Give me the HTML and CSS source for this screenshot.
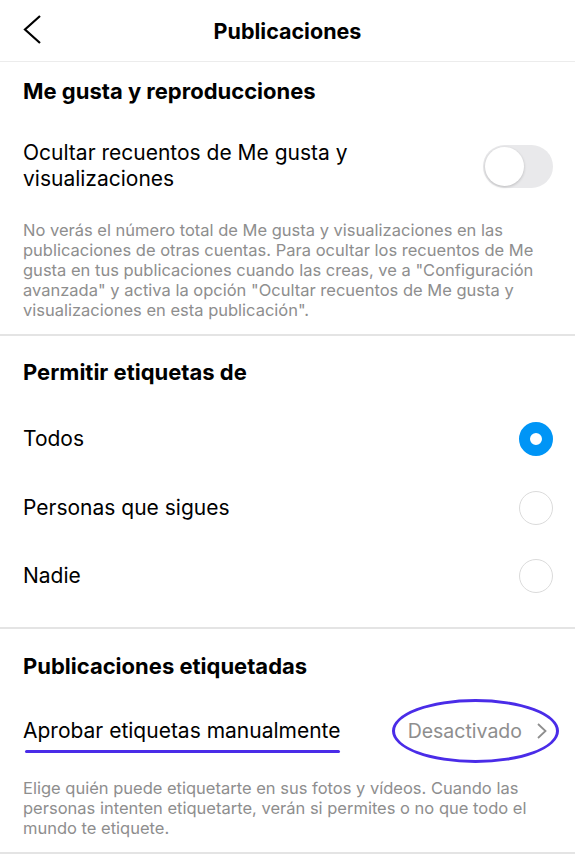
FILE: index.html
```html
<!DOCTYPE html>
<html lang="es">
<head>
    <meta charset="UTF-8">
    <meta name="viewport" content="width=device-width, initial-scale=1.0">
    <title>Publicaciones</title>
    <link rel="stylesheet" href="styles.css">
</head>
<body>
    <header class="topbar">
        <svg class="back" width="20" height="30" viewBox="0 0 20 30">
            <polyline points="17,2 2,15.5 17,29" fill="none" stroke="#000" stroke-width="2.2"/>
        </svg>
        <h1>Publicaciones</h1>
    </header>

    <section class="block first">
        <h2>Me gusta y reproducciones</h2>
        <div class="row toggle-row">
            <span>Ocultar recuentos de Me gusta y visualizaciones</span>
            <div class="switch"><div class="knob"></div></div>
        </div>
        <p class="note">No verás el número total de Me gusta y visualizaciones en las publicaciones de otras cuentas. Para ocultar los recuentos de Me gusta en tus publicaciones cuando las creas, ve a "Configuración avanzada" y activa la opción "Ocultar recuentos de Me gusta y visualizaciones en esta publicación".</p>
    </section>

    <section class="block radios">
        <h2>Permitir etiquetas de</h2>
        <div class="row option"><span>Todos</span><div class="radio checked"></div></div>
        <div class="row option"><span>Personas que sigues</span><div class="radio"></div></div>
        <div class="row option"><span>Nadie</span><div class="radio"></div></div>
    </section>

    <section class="block tagged">
        <h2>Publicaciones etiquetadas</h2>
        <div class="row option">
            <span class="marked">Aprobar etiquetas manualmente</span>
            <div class="value">
                Desactivado
                <svg width="12" height="18" viewBox="0 0 12 18">
                    <polyline points="2,2 9.5,9 2,16" fill="none" stroke="#8e8e8e" stroke-width="1.8"/>
                </svg>
                <div class="circled"></div>
            </div>
        </div>
        <p class="note">Elige quién puede etiquetarte en sus fotos y vídeos. Cuando las personas intenten etiquetarte, verán si permites o no que todo el mundo te etiquete.</p>
    </section>
</body>
</html>
```

FILE: styles.css
```css
body {
    margin: 0;
    font-family: Inter, "Noto Sans", sans-serif;
    color: #000;
    background: #fff;
}
.topbar {
    height: 61px;
    border-bottom: 1px solid #ececec;
    display: flex;
    align-items: center;
    justify-content: center;
    position: relative;
}
.topbar h1 {
    margin: 0;
    font-size: 21.5px;
    font-weight: 700;
}
.back {
    position: absolute;
    left: 23px;
    top: 14px;
}
.block {
    padding: 16px 23px 14px;
    border-bottom: 2px solid #e4e4e4;
}
.block h2 {
    margin: 0;
    font-size: 22px;
    line-height: 26px;
    font-weight: 700;
}
.radios {
    padding-top: 23px;
    padding-bottom: 16px;
}
.tagged {
    padding-top: 24px;
}
.row {
    display: flex;
    align-items: center;
    justify-content: space-between;
    font-size: 21px;
    line-height: 26px;
}
.toggle-row {
    margin-top: 36px;
}
.toggle-row span {
    width: 340px;
}
.switch {
    width: 70px;
    height: 43px;
    border-radius: 22px;
    background: #e9e9eb;
    margin-right: -1px;
    display: flex;
    align-items: center;
    padding-left: 2px;
    box-sizing: border-box;
}
.knob {
    width: 39px;
    height: 39px;
    border-radius: 50%;
    background: #fff;
    box-shadow: 0 1px 3px rgba(0, 0, 0, 0.2);
}
.note {
    margin: 28px 0 0;
    font-size: 16.5px;
    line-height: 20px;
    color: #8e8e8e;
}
.tagged .note {
    margin-top: 13px;
}
.option {
    height: 68px;
}
.radios .option {
    height: 68.5px;
}
.radios h2 {
    margin-bottom: 20px;
}
.tagged h2 {
    margin-bottom: 18px;
}
.radio {
    width: 34px;
    height: 34px;
    border-radius: 50%;
    border: 1.5px solid #dbdbdb;
    box-sizing: border-box;
    margin-right: -1px;
}
.radio.checked {
    border: 11.5px solid #0095f6;
    background: #fff;
}
.marked {
    position: relative;
}
.marked::after {
    content: "";
    position: absolute;
    left: 2px;
    right: 0;
    bottom: -9px;
    height: 3px;
    background: #4a2ce8;
    border-radius: 2px;
}
.value {
    position: relative;
    display: flex;
    align-items: center;
    gap: 14px;
    color: #8e8e8e;
    font-size: 19.5px;
    margin-right: 4px;
}
.circled {
    position: absolute;
    left: -16px;
    right: -11px;
    top: -19px;
    bottom: -19px;
    border: 3px solid #4a2ce8;
    border-radius: 50%;
}
```
